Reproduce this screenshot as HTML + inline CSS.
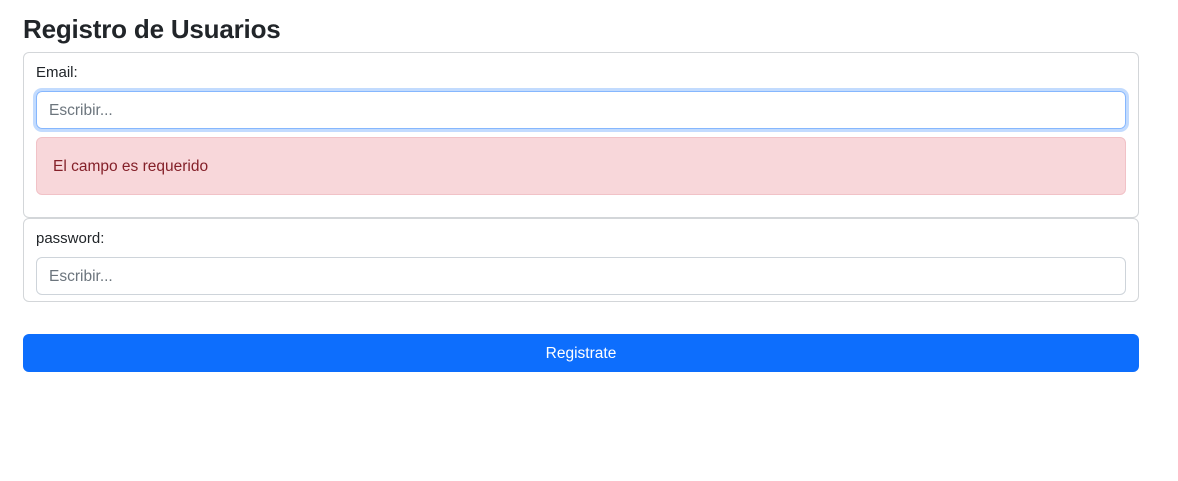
<!DOCTYPE html>
<html><head><style>
body{margin:0;background:#fff;font-family:"Liberation Sans",sans-serif;color:#212529;font-size:16px;width:1178px;height:481px;overflow:hidden}
h1{position:absolute;left:23px;top:9px;margin:0;font-size:26px;font-weight:600;line-height:40px;letter-spacing:-0.2px}
.card{position:absolute;left:23px;width:1114px;border:1px solid #d3d6d9;border-radius:6px}
.lbl{position:absolute;left:12px;font-size:15px;line-height:20px}
.inp{position:absolute;left:12px;height:38px;border:1px solid #ced4da;border-radius:6px;box-sizing:border-box;width:1090px;padding-left:12px;line-height:38px;color:#6c757d;font-size:15.5px}
.focus{border-color:#86b7fe;box-shadow:0 0 0 3px rgba(13,110,253,.25)}
.alert{position:absolute;left:12px;top:84px;width:1090px;height:58px;box-sizing:border-box;background:#f8d7da;border:1px solid #f1c2c7;border-radius:6px;color:#842029;padding-left:16px;line-height:58px;font-size:15.5px}
.btn{position:absolute;left:23px;top:334px;width:1116px;height:38px;background:#0d6efd;border-radius:6px;color:#fff;text-align:center;line-height:40px;font-size:15.5px}
</style></head><body>
<h1>Registro de Usuarios</h1>
<div class="card" style="top:52px;height:164px">
<div class="lbl" style="top:10px">Email:</div>
<div class="inp focus" style="top:38px">Escribir...</div>
<div class="alert">El campo es requerido</div>
</div>
<div class="card" style="top:218px;height:82px">
<div class="lbl" style="top:10px">password:</div>
<div class="inp" style="top:38px">Escribir...</div>
</div>
<div class="btn">Registrate</div>
</body></html>
